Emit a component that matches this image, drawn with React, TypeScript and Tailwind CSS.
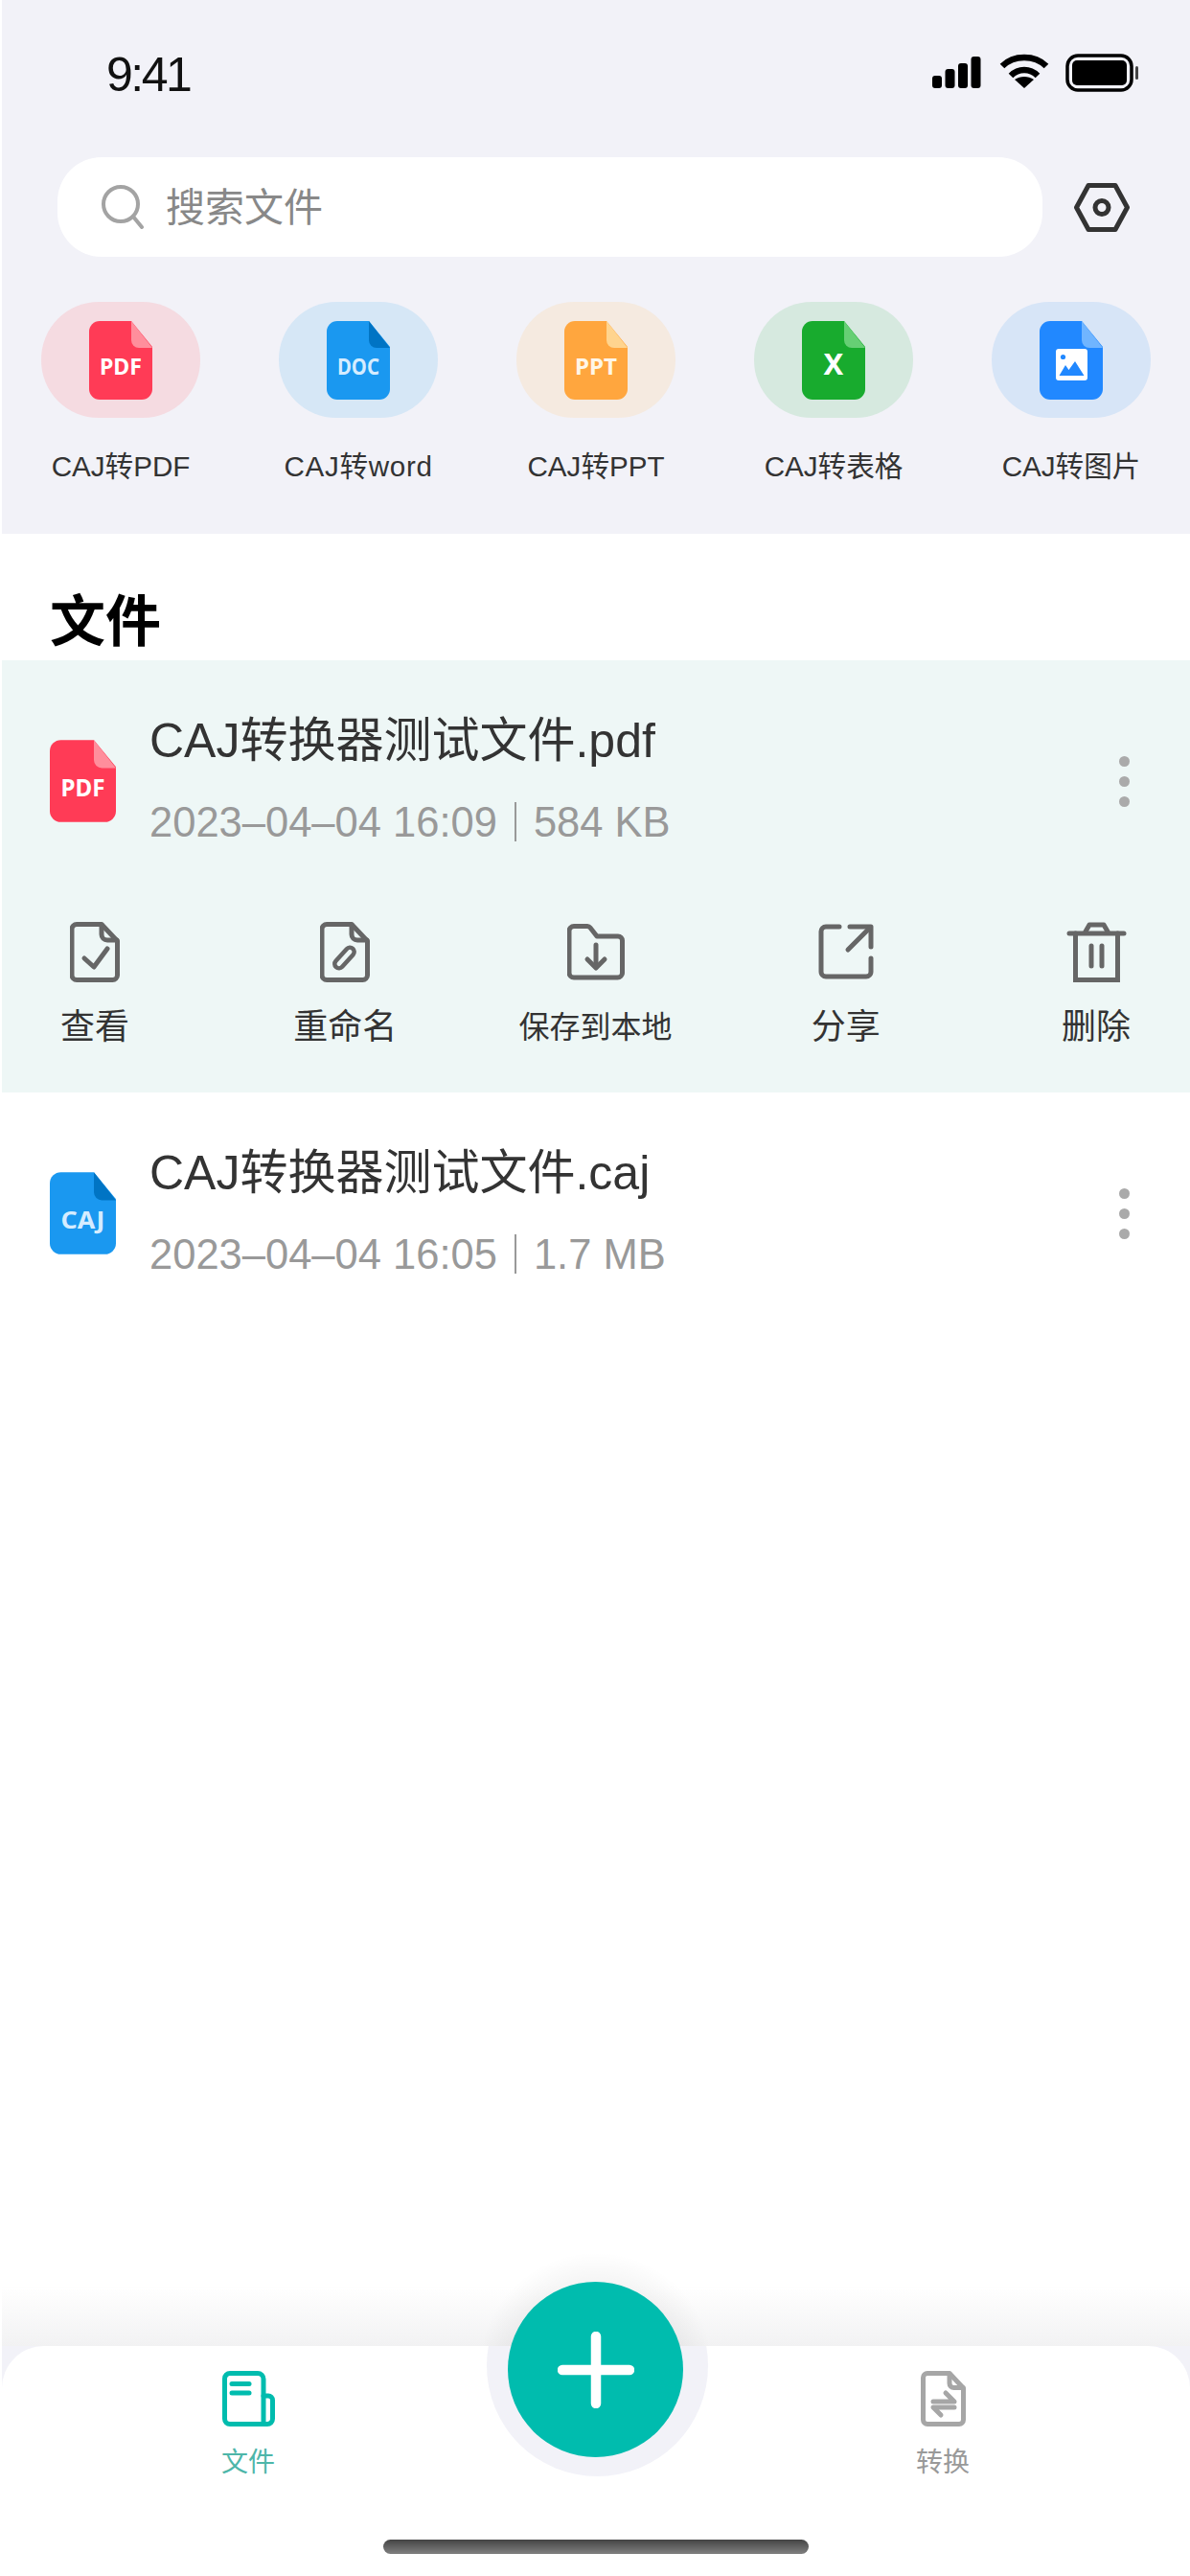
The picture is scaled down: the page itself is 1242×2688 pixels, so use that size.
import React from "react";

const font = "font-['Liberation_Sans','Noto_Sans_CJK_SC',sans-serif]";

function Doc({ w, h, color, fold, label, labelColor, size = 24, children }: { w: number; h: number; color: string; fold: string; label?: string; labelColor?: string; size?: number; children?: React.ReactNode }) {
  return (
    <svg width={w} height={h} viewBox="0 0 66 82" className="block shrink-0">
      <path d="M11 0H44L66 27V71a11 11 0 0 1-11 11H11A11 11 0 0 1 0 71V11A11 11 0 0 1 11 0Z" fill={color} />
      <path d="M44 0L66 28H52a8 8 0 0 1-8-8Z" fill={fold} />
      {label && (
        <text x="33" y="56" textAnchor="middle" fontFamily="'Noto Sans',sans-serif" fontWeight="700" fontSize={size} fill={labelColor} textLength={label.length === 1 ? undefined : 44} lengthAdjust="spacingAndGlyphs">
          {label}
        </text>
      )}
      {children}
    </svg>
  );
}

const shortcuts = [
  { pill: "bg-[#f5dbe1]", color: "#ff3b56", fold: "#ff8e9c", label: "PDF", lc: "#ffffff", text: "CAJ转PDF", track: "tracking-[0px]" },
  { pill: "bg-[#d6e7f6]", color: "#1a98f0", fold: "#0074c4", label: "DOC", lc: "#d5ecff", text: "CAJ转word", track: "tracking-[0.7px]" },
  { pill: "bg-[#f5eae0]", color: "#ffa63e", fold: "#ffd48e", label: "PPT", lc: "#fff6e8", text: "CAJ转PPT", track: "tracking-[0px]" },
  { pill: "bg-[#d6e9df]", color: "#18ab2e", fold: "#66cf74", label: "X", lc: "#ffffff", text: "CAJ转表格", size: 31, track: "tracking-[0px]" },
  { pill: "bg-[#d7e5f7]", color: "#2188ff", fold: "#70b5ff", text: "CAJ转图片", track: "tracking-[0px]" },
];

const S = { fill: "none", stroke: "#666666", strokeWidth: 5, strokeLinecap: "round" as const, strokeLinejoin: "round" as const };

const actions: { label: string; size: string; icon: React.ReactNode }[] = [
  {
    label: "查看",
    size: "text-[36px]",
    icon: (
      <svg width="52" height="63" viewBox="0 0 52 63">
        <g {...S}>
          <path d="M7 2.5H33L49.5 20V55.5a5 5 0 0 1-5 5H7a5 5 0 0 1-5-5V7.5a5 5 0 0 1 5-5Z" />
          <path d="M33 3V13a6 6 0 0 0 6 6H49" />
          <path d="M15 38L25 47L39 28" />
        </g>
      </svg>
    ),
  },
  {
    label: "重命名",
    size: "text-[36px]",
    icon: (
      <svg width="52" height="63" viewBox="0 0 52 63">
        <g {...S}>
          <path d="M7 2.5H33L49.5 20V55.5a5 5 0 0 1-5 5H7a5 5 0 0 1-5-5V7.5a5 5 0 0 1 5-5Z" />
          <path d="M33 3V13a6 6 0 0 0 6 6H49" />
          <rect x="-4.5" y="-13" width="9" height="26" rx="4.5" strokeWidth="4.5" transform="translate(25.5 37.5) rotate(42)" />
        </g>
      </svg>
    ),
  },
  {
    label: "保存到本地",
    size: "text-[32px]",
    icon: (
      <svg width="60" height="59" viewBox="0 0 60 59">
        <g {...S}>
          <path d="M7 2.5H21a4 4 0 0 1 3 1.5L31 13H53a4.5 4.5 0 0 1 4.5 4.5V51a5 5 0 0 1-5 5H7a5 5 0 0 1-5-5V7.5a5 5 0 0 1 5-5Z" />
          <path d="M30 22V45" />
          <path d="M21 37L30 46L39 37" />
        </g>
      </svg>
    ),
  },
  {
    label: "分享",
    size: "text-[36px]",
    icon: (
      <svg width="58" height="58" viewBox="0 0 58 58">
        <g {...S}>
          <path d="M22 3H8a5 5 0 0 0-5 5V50a5 5 0 0 0 5 5H50a5 5 0 0 0 5-5V36" />
          <path d="M33 3H55V24" />
          <path d="M54 4L31 27" />
        </g>
      </svg>
    ),
  },
  {
    label: "删除",
    size: "text-[36px]",
    icon: (
      <svg width="63" height="63" viewBox="0 0 63 63">
        <g {...S}>
          <path d="M3 12H60" />
          <path d="M9.5 12V60.5H53.5V12" strokeLinejoin="miter" />
          <path d="M20 10L24 3H39L43 10" />
          <path d="M26 25V46" />
          <path d="M37 25V46" />
        </g>
      </svg>
    ),
  },
];

function FileRow({ icon, name, date, size }: { icon: React.ReactNode; name: string; date: string; size: string }) {
  return (
    <div className="flex items-center h-[252px] pl-[50px] pr-[63px]">
      {icon}
      <div className="ml-[35px] flex-1 flex flex-col">
        <div className="text-[50px] leading-[60px] text-[#333333] whitespace-nowrap">{name}</div>
        <div className="mt-[25px] text-[43.5px] leading-[60px] text-[#999999] whitespace-nowrap flex items-center">
          <span>{date}</span>
          <span className="mx-[18px] w-[2px] h-[41px] bg-[#999999]" />
          <span>{size}</span>
        </div>
      </div>
      <div className="flex flex-col gap-[10px]">
        <div className="w-[11px] h-[11px] rounded-full bg-[#aaaaaa]" />
        <div className="w-[11px] h-[11px] rounded-full bg-[#aaaaaa]" />
        <div className="w-[11px] h-[11px] rounded-full bg-[#aaaaaa]" />
      </div>
    </div>
  );
}

export default function App() {
  return (
    <div className={`relative w-[1242px] h-[2688px] bg-white pl-[2px] flex flex-col overflow-hidden ${font}`}>
      <header className="h-[557px] bg-[#f2f2f8] flex flex-col">
        <div className="h-[164px] flex justify-between pl-[109px] pr-[54px]">
          <div className="mt-[53px] text-[50px] leading-[50px] tracking-[-2.5px] text-[#111111]">9:41</div>
          <div className="mt-[56px] flex items-start">
            <svg width="51" height="33" viewBox="0 0 51 33" className="mt-[3px]">
              <rect x="0" y="20" width="10" height="13" rx="3" />
              <rect x="13.5" y="13" width="10" height="20" rx="3" />
              <rect x="27" y="7" width="10" height="26" rx="3" />
              <rect x="40.5" y="0" width="10" height="33" rx="3" />
            </svg>
            <svg width="52" height="36" viewBox="0 0 52 36" className="ml-[19px]">
              <path d="M3 13C15 1 37 1 49 13" fill="none" stroke="#000" strokeWidth="6.5" />
              <path d="M12 23C20 15 32 15 40 23" fill="none" stroke="#000" strokeWidth="6.5" />
              <path d="M26 36L16 27C22 23 30 23 36 27Z" />
            </svg>
            <svg width="76" height="40" viewBox="0 0 76 40" className="ml-[17px]">
              <rect x="2" y="2" width="67" height="36" rx="11" fill="none" stroke="#000" strokeWidth="3.5" />
              <rect x="7" y="7" width="57" height="26" rx="5" />
              <rect x="73" y="13" width="3" height="14" rx="1.5" fill="#444" />
            </svg>
          </div>
        </div>

        <div className="flex items-center pl-[58px]">
          <div className="w-[1028px] h-[104px] rounded-[46px] bg-white flex items-center pl-[45px]">
            <svg width="46" height="46" viewBox="0 0 46 46" className="shrink-0">
              <circle cx="21" cy="20" r="18" fill="none" stroke="#a3a3a3" strokeWidth="4" />
              <path d="M34 33L43 44" fill="none" stroke="#a3a3a3" strokeWidth="4" strokeLinecap="round" />
            </svg>
            <span className="ml-[22px] pt-[2px] text-[41px] leading-[50px] text-[#888888]">搜索文件</span>
          </div>
          <svg width="58" height="51" viewBox="0 0 58 51" className="ml-[33px] shrink-0">
            <path d="M2.5 25.5L15 2.5H43L55.5 25.5L43 48.5H15Z" fill="none" stroke="#333333" strokeWidth="5" strokeLinejoin="round" />
            <circle cx="29" cy="25.5" r="7" fill="none" stroke="#333333" strokeWidth="5" />
          </svg>
        </div>

        <div className="mt-[47px] flex justify-between pl-[41px] pr-[41px]">
          {shortcuts.map((s) => (
            <div key={s.text} className="w-[166px] flex flex-col items-center">
              <div className={`w-[166px] h-[121px] rounded-[60px] flex items-start justify-center pt-[20px] ${s.pill}`}>
                <Doc w={66} h={82} color={s.color} fold={s.fold} label={s.label} labelColor={s.lc} size={s.size ?? 24}>
                  {!s.label && (
                    <>
                      <rect x="17" y="29" width="33" height="33" rx="3" fill="#fff" />
                      <circle cx="24.5" cy="37.5" r="2.6" fill={s.color} />
                      <path d="M20.5 57L27 46L30.5 51L37 42L46.5 57Z" fill={s.color} />
                    </>
                  )}
                </Doc>
              </div>
              <div className={`mt-[33px] text-[29.6px] leading-[36px] text-[#333333] whitespace-nowrap ${s.track}`}>{s.text}</div>
            </div>
          ))}
        </div>
      </header>

      <div className="h-[132px] pl-[50px] pt-[64px] text-[58px] leading-[56px] font-bold text-black">文件</div>

      <section className="h-[451px] bg-[#eef7f6]">
        <FileRow
          icon={<Doc w={69} h={86} color="#ff3b56" fold="#ff8e9c" label="PDF" labelColor="#ffffff" />}
          name="CAJ转换器测试文件.pdf"
          date="2023–04–04 16:09"
          size="584 KB"
        />
        <div className="mt-[20px] flex justify-between pl-[17px] pr-[18px]">
          {actions.map((a) => (
            <div key={a.label} className="w-[160px] flex flex-col items-center">
              <div className="h-[64px] flex items-center justify-center">{a.icon}</div>
              <div className={`mt-[29px] leading-[36px] text-[#333333] whitespace-nowrap ${a.size}`}>{a.label}</div>
            </div>
          ))}
        </div>
      </section>

      <FileRow
        icon={<Doc w={69} h={86} color="#1a98f0" fold="#0074c4" label="CAJ" labelColor="#d5ecff" />}
        name="CAJ转换器测试文件.caj"
        date="2023–04–04 16:05"
        size="1.7 MB"
      />

      <footer className="mt-auto relative flex flex-col">
        <div className="relative h-[100px] overflow-hidden bg-[linear-gradient(to_bottom,#ffffff_37%,#f2f2f3_100%)]">
          <div className="absolute left-[470px] top-[-26px] w-[300px] h-[300px] rounded-full bg-[radial-gradient(circle_at_center,rgba(0,0,0,0.05)_0px,rgba(0,0,0,0.04)_92px,rgba(0,0,0,0)_122px)]" />
        </div>
        <div className="bg-[#f2f2f8]">
          <div className="relative h-[240px] rounded-t-[44px] bg-white overflow-hidden flex flex-col">
            <div className="absolute left-[506px] top-[-95px] w-[231px] h-[231px] rounded-full bg-[#f2f2f8]" />
            <div className="pt-[26px] pl-[197px] flex gap-[605px]">
              <div className="w-[120px] flex flex-col items-center">
                <svg width="55" height="58" viewBox="0 0 55 58">
                  <g fill="none" stroke="#00bcae" strokeWidth="5" strokeLinecap="round" strokeLinejoin="round">
                    <path d="M8 2.5H37a6 6 0 0 1 6 6V55.5H8a5.5 5.5 0 0 1-5.5-5.5V8A5.5 5.5 0 0 1 8 2.5Z" />
                    <path d="M43 26H48a4.5 4.5 0 0 1 4.5 4.5V50a5.5 5.5 0 0 1-5.5 5.5H43" />
                    <path d="M10 13.5H28" />
                    <path d="M10 23H28" />
                  </g>
                </svg>
                <div className="mt-[24px] text-[28px] leading-[28px] text-[#4db6a9]">文件</div>
              </div>
              <div className="w-[120px] flex flex-col items-center">
                <svg width="47" height="58" viewBox="0 0 47 58">
                  <g fill="none" stroke="#a6a6a6" strokeWidth="5" strokeLinecap="round" strokeLinejoin="round">
                    <path d="M7 2.5H30L44.5 18V51a4.5 4.5 0 0 1-4.5 4.5H7A4.5 4.5 0 0 1 2.5 51V7A4.5 4.5 0 0 1 7 2.5Z" />
                    <path d="M30 3V13a4.5 4.5 0 0 0 4.5 4.5H44" />
                    <path d="M13 32H35L26 23" />
                    <path d="M35 38H13L21 46" />
                  </g>
                </svg>
                <div className="mt-[24px] text-[28px] leading-[28px] text-[#999999]">转换</div>
              </div>
            </div>
            <div className="mt-[66px] mx-auto w-[444px] h-[15px] rounded-full bg-[linear-gradient(to_bottom,#444444,#808080)]" />
          </div>
        </div>
        <div className="absolute left-[528px] top-[33px] w-[183px] h-[183px] rounded-full bg-[#00bcae] flex items-center justify-center">
          <svg width="80" height="80" viewBox="0 0 80 80">
            <path d="M40 5V75M5 40H75" stroke="#fff" strokeWidth="10.5" strokeLinecap="round" fill="none" />
          </svg>
        </div>
      </footer>
    </div>
  );
}
